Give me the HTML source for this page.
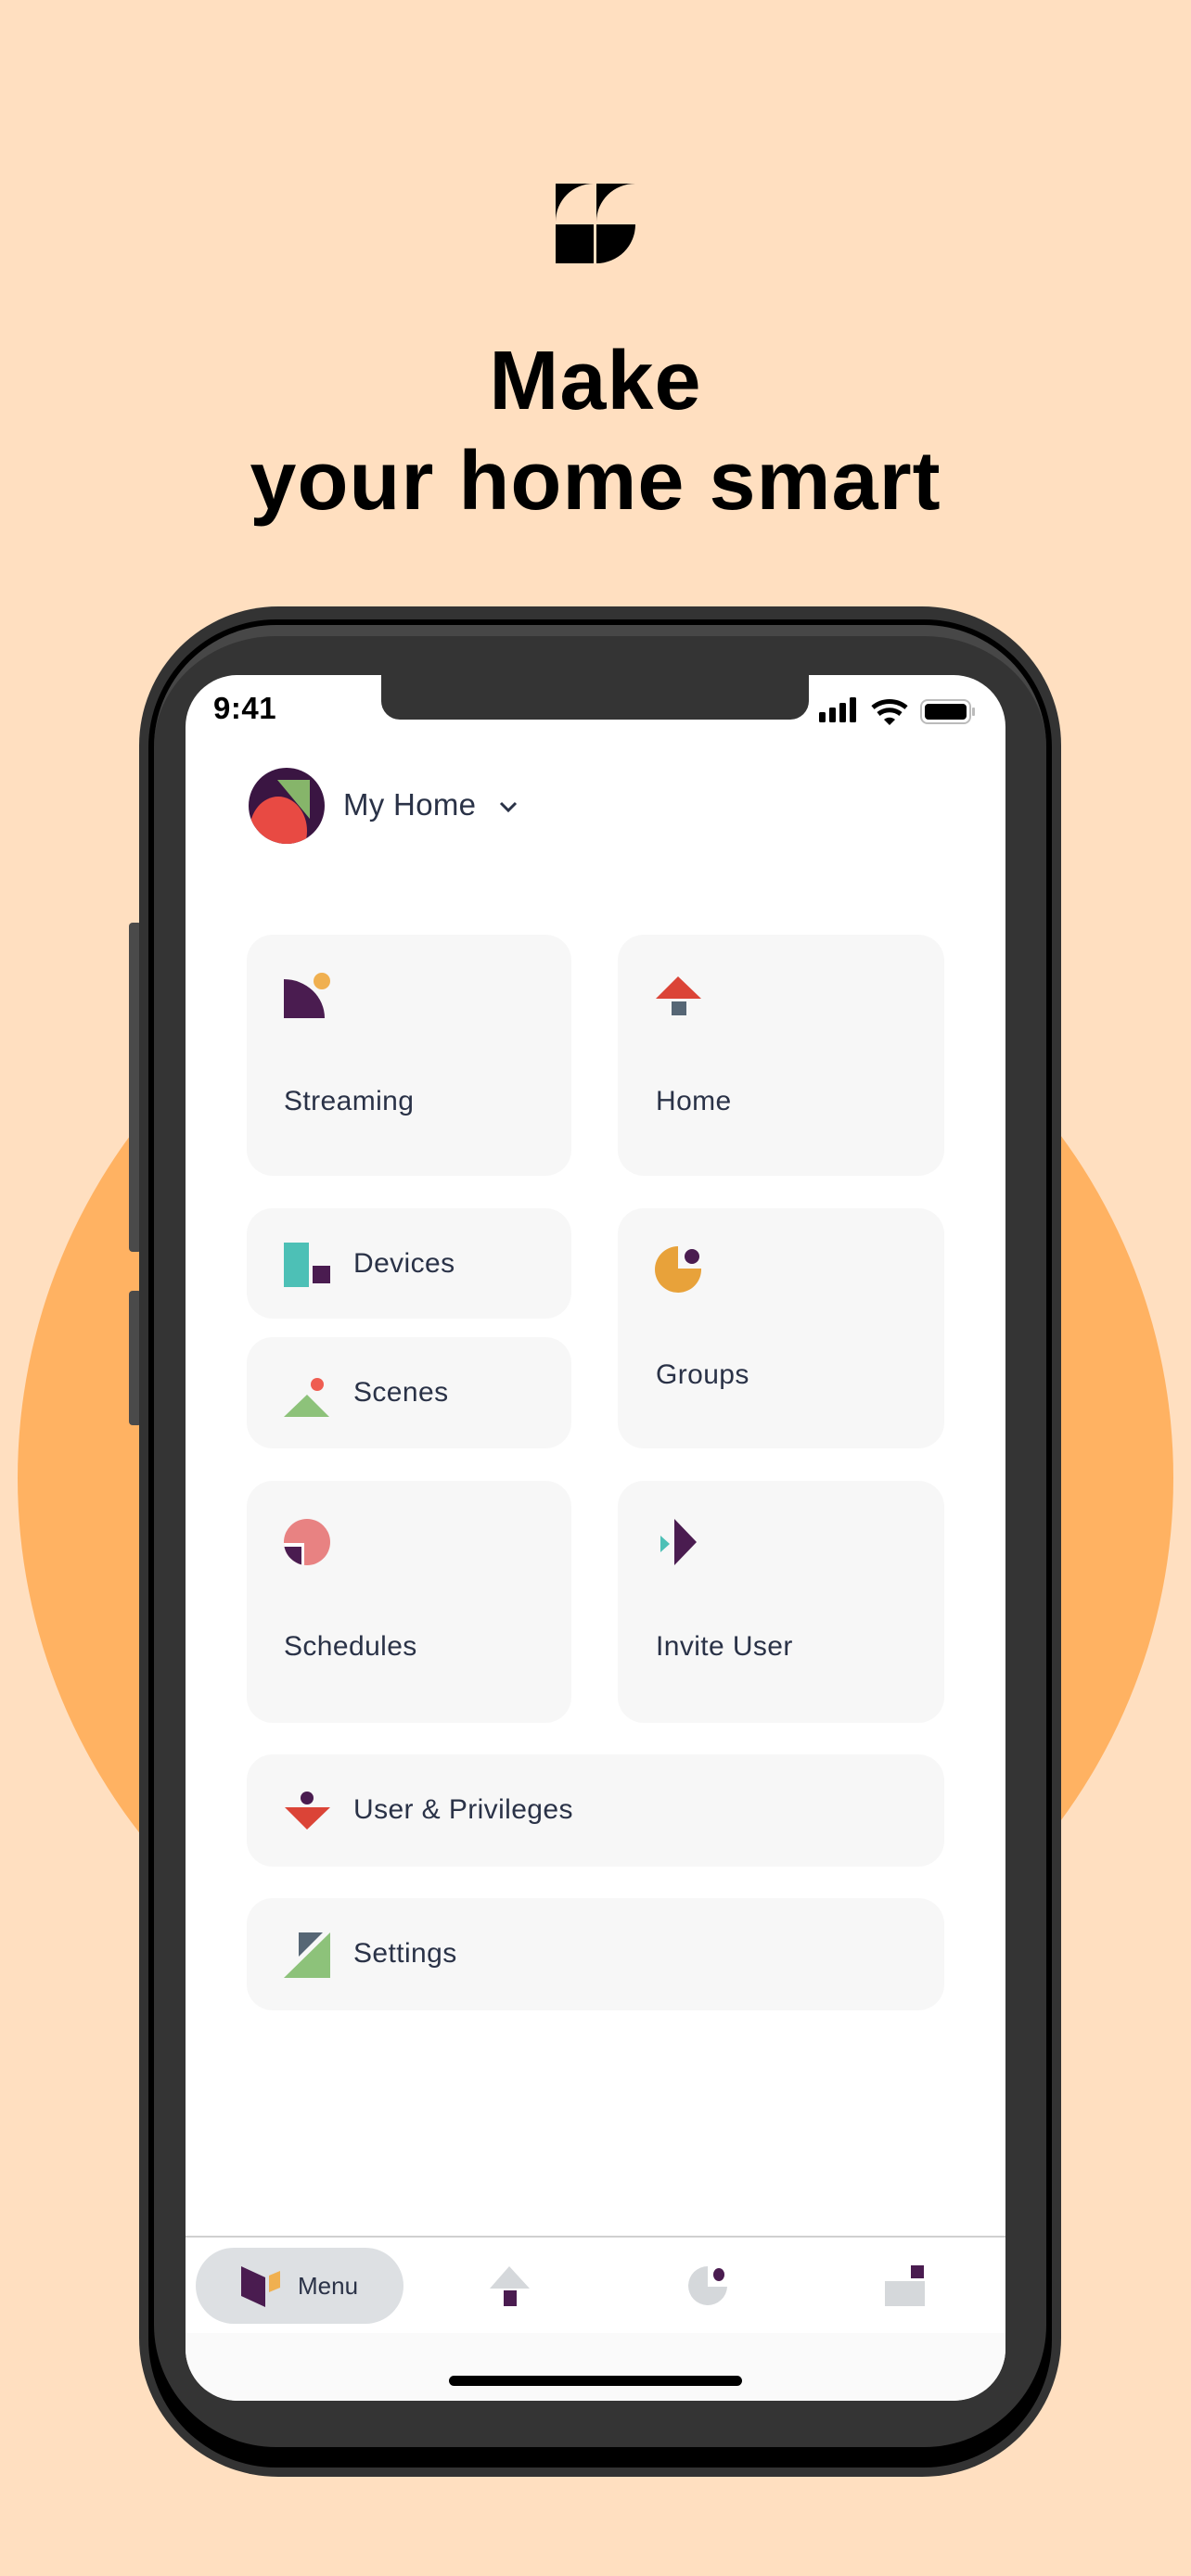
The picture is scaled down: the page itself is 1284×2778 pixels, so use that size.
<!DOCTYPE html>
<html><head><meta charset="utf-8"><style>
*{margin:0;padding:0;box-sizing:border-box}
body{width:1284px;height:2778px;background:#FFDFC0;position:relative;overflow:hidden;font-family:"Liberation Sans",sans-serif}
.abs{position:absolute}
.title{left:0;width:1284px;text-align:center;font-weight:bold;font-size:90px;color:#000;letter-spacing:1px;line-height:108px}
.card{position:absolute;background:#F7F7F7;border-radius:28px}
.lbl{position:absolute;font-size:30px;color:#2A3247;letter-spacing:0.4px;line-height:36px;white-space:nowrap}
</style></head><body>
<div class="abs" style="left:19px;top:971px;width:1246px;height:1246px;border-radius:50%;background:#FFB262"></div>

<svg class="abs" style="left:0;top:0" width="1284" height="400">
<path d="M599 198 H640 A41 41 0 0 0 599 239 Z" fill="#000"/>
<path d="M643 198 H685 A42 41 0 0 0 643 239 Z" fill="#000"/>
<rect x="599" y="242" width="41" height="42" fill="#000"/>
<path d="M643 242 H685 A42 42 0 0 1 643 284 Z" fill="#000"/>
</svg>
<div class="abs title" style="top:357px">Make</div>
<div class="abs title" style="top:465px">your home smart</div>

<!-- side buttons -->
<div class="abs" style="left:139px;top:995px;width:14px;height:355px;background:#4a4a4a;border-radius:4px"></div>
<div class="abs" style="left:139px;top:1392px;width:14px;height:145px;background:#4a4a4a;border-radius:4px"></div>
<!-- phone -->
<div class="abs" style="left:150px;top:654px;width:994px;height:2017px;background:#333;border-radius:150px"></div>
<div class="abs" style="left:160px;top:668px;width:974px;height:1993px;background:#000;border-radius:138px"></div>
<div class="abs" style="left:166px;top:674px;width:962px;height:1965px;background:#343434;border-radius:132px;border-top:12px solid #474747"></div>
<!-- screen -->
<div class="abs" style="left:200px;top:728px;width:884px;height:1861px;background:#fff;border-radius:56px;overflow:hidden">
  <div class="abs" style="left:0;top:1788px;width:884px;height:80px;background:#FAFAFA"></div>
</div>
<div class="abs" style="left:411px;top:720px;width:461px;height:56px;background:#343434;border-radius:0 0 20px 20px"></div>

<div class="abs" style="left:230px;top:745px;font-size:33px;font-weight:bold;color:#000;letter-spacing:0.5px">9:41</div>

<!-- cards -->
<div class="card" style="left:266px;top:1008px;width:350px;height:260px"></div>
<div class="card" style="left:666px;top:1008px;width:352px;height:260px"></div>
<div class="card" style="left:266px;top:1303px;width:350px;height:119px"></div>
<div class="card" style="left:266px;top:1442px;width:350px;height:120px"></div>
<div class="card" style="left:666px;top:1303px;width:352px;height:259px"></div>
<div class="card" style="left:266px;top:1597px;width:350px;height:261px"></div>
<div class="card" style="left:666px;top:1597px;width:352px;height:261px"></div>
<div class="card" style="left:266px;top:1892px;width:752px;height:121px"></div>
<div class="card" style="left:266px;top:2047px;width:752px;height:121px"></div>

<div class="lbl" style="left:306px;top:1170px">Streaming</div>
<div class="lbl" style="left:707px;top:1170px">Home</div>
<div class="lbl" style="left:381px;top:1345px">Devices</div>
<div class="lbl" style="left:381px;top:1484px">Scenes</div>
<div class="lbl" style="left:707px;top:1465px">Groups</div>
<div class="lbl" style="left:306px;top:1758px">Schedules</div>
<div class="lbl" style="left:707px;top:1758px">Invite User</div>
<div class="lbl" style="left:381px;top:1934px">User &amp; Privileges</div>
<div class="lbl" style="left:381px;top:2089px">Settings</div>

<div class="abs" style="left:370px;top:849px;font-size:33px;color:#2A3247;letter-spacing:0.3px">My Home</div>

<!-- bottom nav -->
<div class="abs" style="left:200px;top:2411px;width:884px;height:2px;background:#D0D0D0"></div>
<div class="abs" style="left:211px;top:2424px;width:224px;height:82px;border-radius:41px;background:#DDE0E3"></div>
<div class="abs" style="left:321px;top:2450px;font-size:26px;color:#2A3247">Menu</div>
<div class="abs" style="left:484px;top:2562px;width:316px;height:11px;border-radius:6px;background:#000"></div>

<svg class="abs" style="left:0;top:0" width="1284" height="2778">
<!-- status icons -->
<rect x="883" y="768" width="7" height="11" rx="1.5" fill="#000"/>
<rect x="894" y="763" width="7" height="16" rx="1.5" fill="#000"/>
<rect x="905" y="758" width="7" height="21" rx="1.5" fill="#000"/>
<rect x="916" y="752" width="7" height="27" rx="1.5" fill="#000"/>
<path d="M941 763 A28 28 0 0 1 977 763" stroke="#000" stroke-width="5" fill="none"/>
<path d="M947 770 A19 19 0 0 1 971 770" stroke="#000" stroke-width="5" fill="none"/>
<path d="M953 776 L959 782 L965 776 A9 9 0 0 0 953 776Z" fill="#000"/>
<rect x="993" y="755" width="53" height="25" rx="7" fill="none" stroke="#bbb" stroke-width="2"/>
<rect x="997" y="759" width="45" height="17" rx="4" fill="#000"/>
<rect x="1048" y="763" width="3" height="9" rx="1" fill="#bbb"/>
<!-- avatar -->
<defs><clipPath id="av"><circle cx="309" cy="869" r="41"/></clipPath>
<clipPath id="sc"><circle cx="331" cy="1663" r="25"/></clipPath></defs>
<circle cx="309" cy="869" r="41" fill="#3A1542"/>
<g clip-path="url(#av)">
<ellipse cx="300" cy="896" rx="31" ry="37" fill="#E84A43"/>
<path d="M299 841 L334 841 L334 883 Z" fill="#86B56A"/>
</g>
<path d="M540 866 L548 874 L556 866" stroke="#2A3247" stroke-width="3" fill="none"/>
<!-- streaming -->
<path d="M306 1056 A44 42 0 0 1 350 1098 H306 Z" fill="#4A1C50"/>
<circle cx="347" cy="1058" r="9" fill="#F0B050"/>
<!-- home -->
<path d="M731 1053 L756 1077 H707 Z" fill="#DB4437"/>
<rect x="724" y="1080" width="16" height="15" fill="#566675"/>
<!-- devices -->
<rect x="306" y="1340" width="27" height="48" fill="#4DC0B6"/>
<rect x="337" y="1365" width="19" height="19" fill="#4A1C50"/>
<!-- scenes -->
<path d="M331 1504 L355 1528 H306 Z" fill="#8DC27A"/>
<circle cx="342" cy="1493" r="7" fill="#EF5D51"/>
<!-- groups -->
<path d="M731 1344 V1368 H756 A25 25 0 1 1 731 1344 Z" fill="#E8A23A"/>
<circle cx="746" cy="1355" r="8" fill="#4A1C50"/>
<!-- schedules -->
<circle cx="331" cy="1663" r="25" fill="#E88282"/>
<g clip-path="url(#sc)">
<rect x="300" y="1664" width="28" height="30" fill="#fff"/>
<rect x="300" y="1668" width="25" height="26" fill="#4A1C50"/>
</g>
<!-- invite -->
<path d="M727 1638 L751 1663 L727 1688 Z" fill="#4A1C50"/>
<path d="M712 1656 L722 1665 L712 1674 Z" fill="#4DC0B6"/>
<!-- user -->
<circle cx="331" cy="1939" r="7" fill="#4A1C50"/>
<path d="M307 1949 H356 L331 1973 Z" fill="#DB4437"/>
<!-- settings -->
<path d="M322 2084 H348 L322 2110 Z" fill="#566675"/>
<path d="M356 2084 V2133 H306 Z" fill="#8DC27A"/>
<!-- nav -->
<path d="M260 2444 L286 2456 V2488 L260 2476 Z" fill="#4A1C50"/>
<path d="M290 2454 L302 2449 V2467 L290 2472 Z" fill="#F0B050"/>
<path d="M549 2444 L571 2468 H528 Z" fill="#D5D8DB"/>
<rect x="543" y="2470" width="14" height="17" fill="#4A1C50"/>
<path d="M763 2444 V2466 H784 A21 21 0 1 1 763 2444 Z" fill="#D5D8DB"/>
<ellipse cx="775" cy="2453" rx="6" ry="7" fill="#4A1C50"/>
<rect x="982" y="2443" width="14" height="14" fill="#4A1C50"/>
<rect x="954" y="2460" width="43" height="27" fill="#D5D8DB"/>
</svg>
</body></html>
